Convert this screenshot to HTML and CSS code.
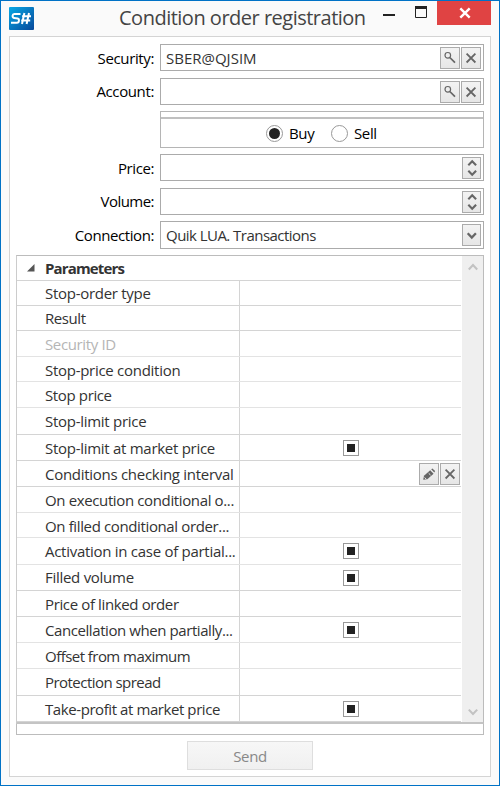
FILE: index.html
```html
<!DOCTYPE html>
<html lang="en">
<head>
<meta charset="utf-8">
<title>Condition order registration</title>
<link rel="stylesheet" href="styles.css">
</head>
<body>
<svg class="defs" width="0" height="0">
  <symbol id="search" viewBox="0 0 18 20"><circle cx="6.8" cy="7.3" r="2.8" fill="none" stroke="#666" stroke-width="1.2"/><path d="M8.8 9.5 14 14.6" stroke="#666" stroke-width="1.7"/></symbol>
  <symbol id="clear" viewBox="0 0 18 20"><path d="M4.6 5.7 13.4 14.5M13.4 5.7 4.6 14.5" stroke="#666" stroke-width="1.8"/></symbol>
  <symbol id="spin" viewBox="0 0 17 20"><path d="M5.3 7.2 9.2 3.2 13.1 7.2M5.3 12.8 9.2 16.8 13.1 12.8" fill="none" stroke="#666" stroke-width="2.1"/></symbol>
</svg>
<div class="window">
  <header class="titlebar">
    <svg class="logo" width="25" height="23" viewBox="0 0 25 23"><defs><linearGradient id="lg" x1="0" y1="0" x2="1" y2="1"><stop offset="0" stop-color="#08a9e6"/><stop offset="1" stop-color="#08489a"/></linearGradient></defs><rect width="25" height="23" rx="1" fill="url(#lg)"/><path d="M11.5 7H5.3Q3.8 7 3.6 8.7 3.4 10.7 5 10.9L8.7 11.4Q10.2 11.7 9.9 13.8 9.7 15.7 8 15.7H2M15.4 6 13 17M20 6 17.6 17M13.1 9.2H22M12.2 13.6H21.2" fill="none" stroke="#fff" stroke-width="2"/></svg>
    <h1 class="title">Condition order registration</h1>
    <svg class="min" width="12" height="2"><rect width="12" height="2" fill="#222"/></svg>
    <svg class="max" width="12" height="12"><path d="M.5.5h11v11H.5z" fill="none" stroke="#222"/><path d="M0 0h12v3H0z" fill="#222"/></svg>
    <div class="close"><svg width="12" height="12"><path d="M1.3 1.3 10.7 10.7M10.7 1.3 1.3 10.7" stroke="#fff" stroke-width="2.4"/></svg></div>
  </header>
  <main class="content">
    <div class="form">
      <div class="field"><label>Security:</label><div class="box"><span class="code">SBER@QJSIM</span><i class="btn"><svg><use href="#search"/></svg></i><i class="btn"><svg><use href="#clear"/></svg></i></div></div>
      <div class="field f2"><label class="up">Account:</label><div class="box"><span></span><i class="btn"><svg><use href="#search"/></svg></i><i class="btn"><svg><use href="#clear"/></svg></i></div></div>
      <div class="side">
        <div class="strip"></div>
        <div class="radios"><i class="radio on"></i><span class="buy">Buy</span><i class="radio"></i><span class="sell">Sell</span></div>
      </div>
      <div class="field"><label class="tight">Price:</label><div class="box"><span></span><i class="btn spin"><svg><use href="#spin"/></svg></i></div></div>
      <div class="field f4"><label class="tighter up">Volume:</label><div class="box"><span></span><i class="btn spin"><svg><use href="#spin"/></svg></i></div></div>
      <div class="field f5"><label class="tight">Connection:</label><div class="box"><span class="tighter">Quik LUA. Transactions</span><i class="btn spin"><svg viewBox="0 0 17 20"><path d="M4.7 8.2 8.8 12.5 12.9 8.2" fill="none" stroke="#666" stroke-width="2.3"/></svg></i></div></div>
    </div>
    <section class="grid">
      <div class="rows">
        <div class="row head"><svg width="8" height="8"><path d="M7.5 0V7.5H0z" fill="#555"/></svg><b>Parameters</b></div>
        <div class="row h25"><span class="loose">Stop-order type</span><div></div></div>
        <div class="row h25"><span class="tight">Result</span><div></div></div>
        <div class="row soft off"><span>Security ID</span><div></div></div>
        <div class="row h25 soft"><span class="loose down">Stop-price condition</span><div></div></div>
        <div class="row soft"><span>Stop price</span><div></div></div>
        <div class="row h27"><span class="loose">Stop-limit price</span><div></div></div>
        <div class="row"><span class="loose">Stop-limit at market price</span><div><i class="check"></i></div></div>
        <div class="row tools"><span class="loose">Conditions checking interval</span><div><i class="btn"><svg viewBox="0 0 18 20"><path d="M3.2 15.8 4 11.7 10.2 6.3 13.6 9.7 7.3 15.3z" fill="#666"/><path d="M11.2 5.3 12.4 4.4 15.1 7.1 14.3 8.6z" fill="#666"/><path d="M4.6 13.6 6.4 15.2M8.7 9.3 10.5 11" stroke="#eee"/></svg></i><i class="btn"><svg><use href="#clear"/></svg></i></div></div>
        <div class="row soft"><span>On execution conditional o...</span><div></div></div>
        <div class="row h25 soft"><span class="down">On filled conditional order...</span><div></div></div>
        <div class="row h27 soft"><span class="loose">Activation in case of partial...</span><div><i class="check"></i></div></div>
        <div class="row"><span class="loose up">Filled volume</span><div><i class="check"></i></div></div>
        <div class="row"><span>Price of linked order</span><div></div></div>
        <div class="row soft"><span class="tight">Cancellation when partially...</span><div><i class="check"></i></div></div>
        <div class="row soft"><span class="tighter">Offset from maximum</span><div></div></div>
        <div class="row h27"><span class="tighter">Protection spread</span><div></div></div>
        <div class="row"><span class="tight">Take-profit at market price</span><div><i class="check"></i></div></div>
      </div>
      <div class="scroll"><svg width="10" height="8"><path d="M.8 6.4 5 2 9.2 6.4" fill="none" stroke="#c2c2c2" stroke-width="2.1"/></svg><svg width="10" height="8"><path d="M.8 1.6 5 6 9.2 1.6" fill="none" stroke="#c2c2c2" stroke-width="2.1"/></svg></div>
    </section>
    <div class="foot"></div>
    <button class="send" disabled><span>Send</span></button>
  </main>
</div>
</body>
</html>
```
FILE: styles.css
```css
*{box-sizing:border-box}
body{margin:0;font:15px/20px "Open Sans","Noto Sans",sans-serif;font-stretch:92%;letter-spacing:-.37px;color:#333;background:#fafafa}
.defs{display:none}
.window{width:500px;height:786px;border:1px solid #0072c6;background:#fafafa;padding:0 8px 8px;display:flex;flex-direction:column}
.titlebar{height:35px;display:flex;align-items:flex-start;flex:none}
.logo{margin:6px 17px 0 0;flex:none}
.title{width:249px;margin:2px 15px 0 68px;font-size:20px;line-height:30px;font-weight:400;letter-spacing:-.5px;color:#444;white-space:nowrap;flex:none}
.min{margin:13px 20px 0 0}
.max{margin:5px 10px 0 0}
.titlebar svg{flex:none}
.close{width:54px;height:24px;flex:none;background:#e04343;display:flex;align-items:center;justify-content:center}
.titlebar .close svg{margin-left:2px;margin-top:-1px}
.content{width:482px;height:741px;border:1px solid #d4d4d4;background:#fff;flex:none}
.form{width:474px;height:218px;padding-top:7px;display:flex;flex-direction:column}
.field{height:27px;display:flex;align-items:center;flex:none}
.f2{margin-top:7px}
.f4{margin-top:7px}
.f5{margin-top:6px;height:28px}
.field label{width:144px;text-align:right;color:#000;margin-right:6px;white-space:nowrap}
.box{width:324px;height:100%;border:1px solid #ababab;display:flex;align-items:center;gap:1px;padding:0 2px 0 5px}
.box span{flex:1;white-space:nowrap;color:#333}
.box .code{letter-spacing:0}
.loose{letter-spacing:-.28px}
.tight{letter-spacing:-.42px}
.tighter{letter-spacing:-.54px}
.up{padding-bottom:2px}
.down{padding-top:2px}
.btn{width:20px;height:22px;border:1px solid #ababab;background:linear-gradient(#f3f3f3,#e6e6e6);display:block;flex:none}
.btn svg{display:block;width:100%;height:100%}
.spin{width:19px}
.side{width:324px;height:37px;margin:6px 0;align-self:flex-start;margin-left:150px;border:1px solid #b5b5b5;flex:none}
.strip{height:7px;border-bottom:2px solid #c0c0c0}
.radios{height:28px;display:flex;align-items:center;padding-left:105px;color:#000}
.radio{width:17px;height:17px;border:1px solid #999;border-radius:50%;margin-right:6px;display:flex;align-items:center;justify-content:center}
.on::after{content:"";width:11px;height:11px;border-radius:50%;background:#222}
.buy{width:26px;margin-right:16px}
.grid{width:468px;height:469px;margin-left:6px;border:1px solid #bcbcbc;border-left-color:#ccc;border-bottom:2px solid #c4c4c4;display:flex;justify-content:space-between}
.rows{width:444px}
.row{height:26px;border-bottom:1px solid #d4d4d4;display:flex;align-items:center;white-space:nowrap}
.row>span{width:222px;padding-left:28px;flex:none}
.row>div{flex:1;align-self:stretch;border-left:1px solid #d4d4d4;display:flex;align-items:center;justify-content:center}
.h25,.head{height:25px}
.h27{height:27px}
.soft{border-bottom-color:#e3e3e3}
.off{color:#b5b5b5}
.head svg{margin:0 10px 0 10px}
.head b{letter-spacing:-.85px}
.row.tools>div{justify-content:flex-end;padding-right:1px;gap:1px}
.check{width:16px;height:16px;border:1px solid #999;padding:3px}
.check::after{content:"";display:block;width:8px;height:8px;background:#222}
.scroll{width:21px;background:#efefef;display:flex;flex-direction:column;justify-content:space-between;align-items:center;padding:7px 0 6px}
.foot{width:468px;height:11px;margin-left:6px;border:1px solid #bcbcbc;border-top:0}
.send{display:flex;align-items:center;justify-content:center;width:126px;height:29px;margin:6px 0 0 177px;padding:0;border:1px solid #dedede;background:linear-gradient(#f7f7f7,#f0f0f0);font:inherit;letter-spacing:inherit;color:#888}
```
